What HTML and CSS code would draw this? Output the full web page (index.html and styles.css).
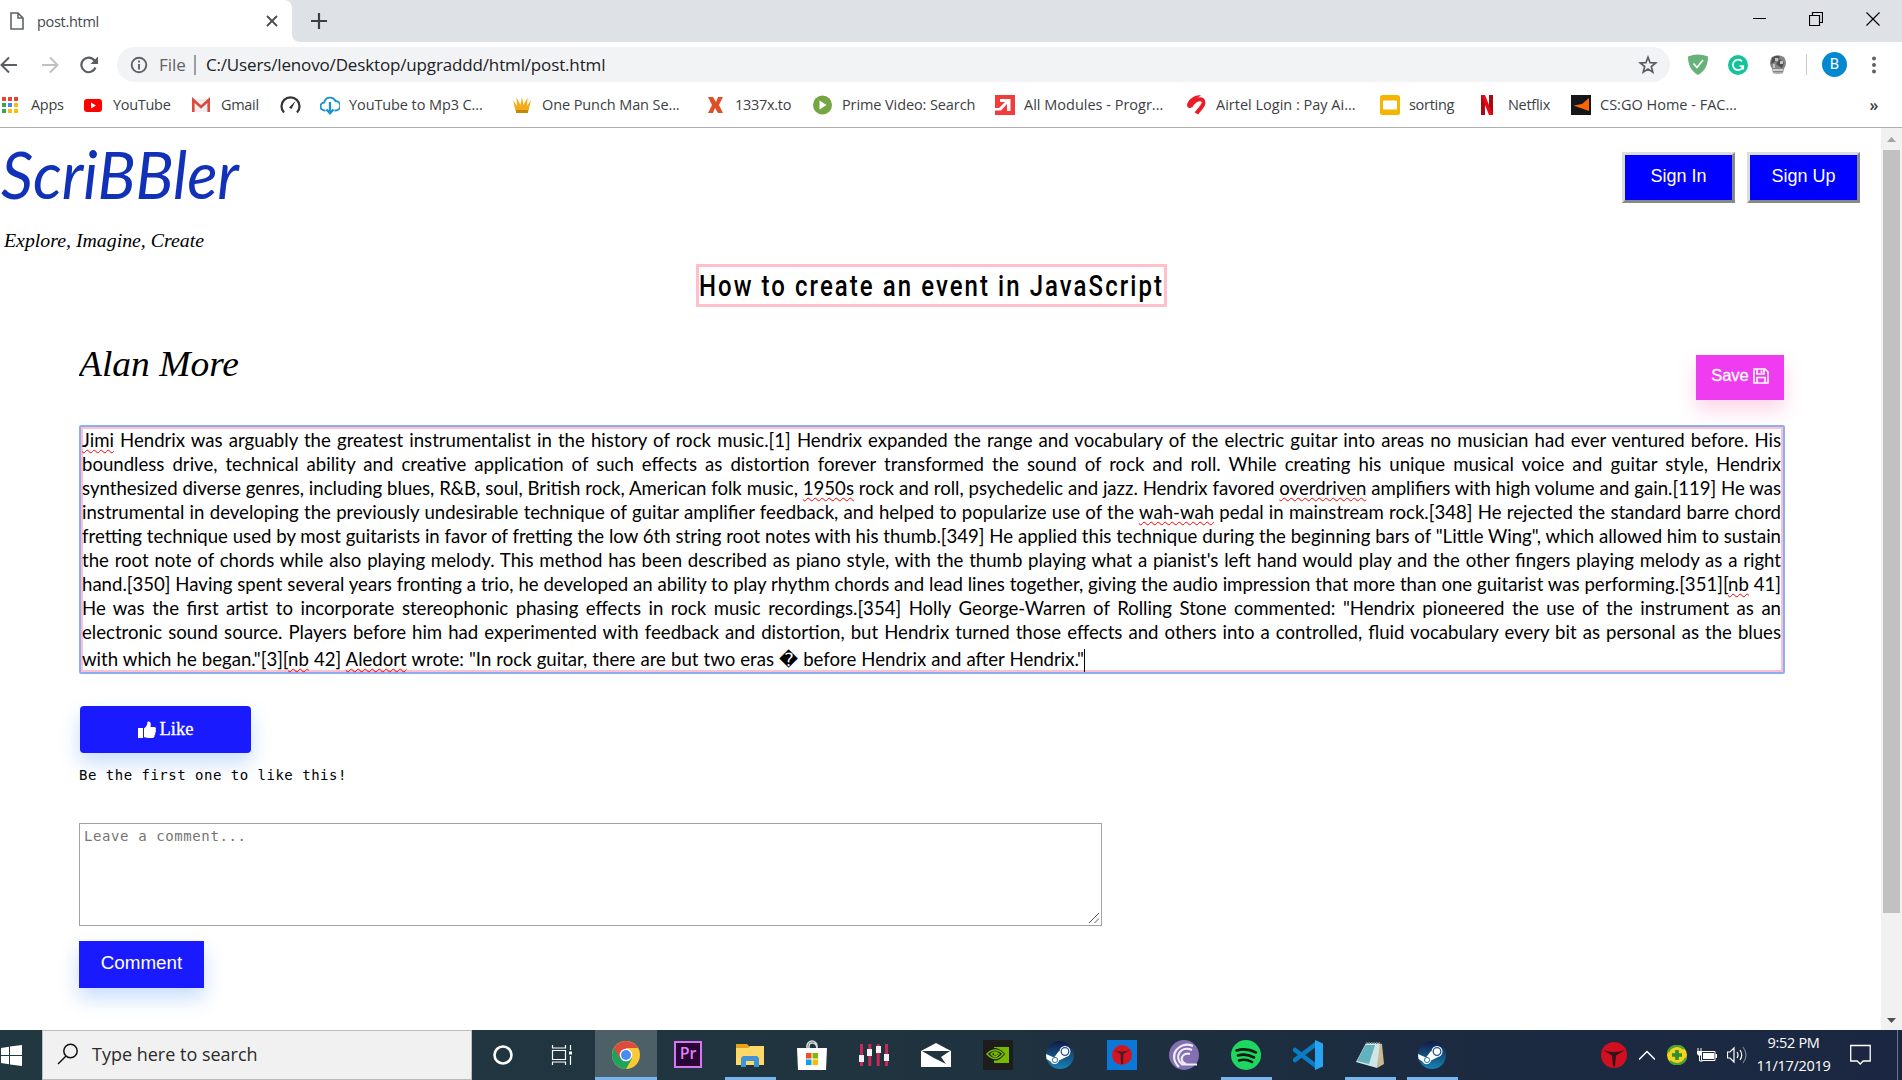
FILE: index.html
```html
<!DOCTYPE html>
<html lang="en">
<head>
<meta charset="utf-8">
<title>post.html</title>
<link rel="stylesheet" href="styles.css">
</head>
<body>
<div class="browser">
  <div class="tabstrip">
    <div class="tab">
      <svg width="16" height="20" viewBox="0 0 16 20"><path d="M2 2h7l5 5v11H2zM9 2v5h5" fill="none" stroke="#5f6368" stroke-width="1.6"/></svg>
      <span class="tab-title">post.html</span>
      <svg class="tab-close" width="12" height="12" viewBox="0 0 12 12"><path d="M1 1l10 10M11 1L1 11" stroke="#4a4d51" stroke-width="1.8"/></svg>
    </div>
    <svg class="tab-curve" width="9" height="42" viewBox="0 0 9 42"><path d="M0 0v42h9C3 42 0 39 0 33z" fill="#fff"/></svg>
    <svg class="new-tab" width="16" height="16" viewBox="0 0 16 16"><path d="M8 0v16M0 8h16" stroke="#3c4043" stroke-width="2.2"/></svg>
    <div class="window-buttons">
      <svg width="14" height="14" viewBox="0 0 14 14"><path d="M0 6.500h13" stroke="#000"/></svg>
      <svg width="14" height="14" viewBox="0 0 14 14"><path d="M.5 3.500h10v10H.5zM3.500 3V.5h10v10H11" fill="none" stroke="#000" stroke-width="1.200"/></svg>
      <svg width="14" height="14" viewBox="0 0 14 14"><path d="M.5.500l13 13M13.500.500l-13 13" stroke="#000" stroke-width="1.200"/></svg>
    </div>
  </div>

  <div class="toolbar">
    <svg class="nav" width="18" height="18" viewBox="0 0 18 18"><path d="M17 9H1.500M9 1.500L1.500 9 9 16.500" fill="none" stroke="#5a5e63" stroke-width="2"/></svg>
    <svg class="nav" width="18" height="18" viewBox="0 0 18 18"><path d="M1 9h15.500M9 1.500L16.500 9 9 16.500" fill="none" stroke="#bfc1c4" stroke-width="2"/></svg>
    <svg class="nav" width="18" height="18" viewBox="0 0 18 18"><path d="M15.500 11.500A7.300 7.300 0 1 1 14.500 4.500" fill="none" stroke="#5a5e63" stroke-width="2.200"/><path d="M18 .5V8h-7.500z" fill="#5a5e63"/></svg>
    <div class="omnibox">
      <svg width="18" height="18" viewBox="0 0 18 18"><circle cx="9" cy="9" r="7.300" fill="none" stroke="#5f6368" stroke-width="1.900"/><path d="M9 4.500v2M9 8v5.500" stroke="#5f6368" stroke-width="1.900"/></svg>
      <span class="scheme">File</span>
      <span class="url">C:/Users/lenovo/Desktop/upgraddd/html/post.html</span>
      <svg class="star" width="20" height="20" viewBox="0 0 20 20"><path d="M10 2.300l2.100 5.400 5.600.3-4.400 3.600 1.500 5.600L10 14.100l-4.800 3.100 1.500-5.600L2.300 8l5.600-.3z" fill="none" stroke="#5a5e63" stroke-width="1.700"/></svg>
    </div>
    <div class="extensions">
      <svg width="20" height="21" viewBox="0 0 20 21"><path d="M0 2.500Q10-1.500 20 2.500C20 11 17 17 10 21 3 17 0 11 0 2.500z" fill="#67b279"/><path d="M5.500 9.500l3.500 4 6-7.500" fill="none" stroke="#fff" stroke-width="1.700"/></svg>
      <svg width="20" height="20" viewBox="0 0 20 20"><circle cx="10" cy="10" r="10" fill="#15c39a"/><path d="M14 6.400A5.200 5.200 0 1 0 15.200 11H11.500M15.200 10.500v4" fill="none" stroke="#fff" stroke-width="1.700"/></svg>
      <svg width="20" height="20" viewBox="0 0 20 20"><path d="M4 2Q10-1.500 16 2 20 8 16 13.500L15 18Q10 20 5 18l-1-4.500Q0 8 4 2z" fill="#858585"/><path d="M4 3Q9-1 12 2L8 6 3 9zM8 9l4-5 4 4-2 5z" fill="#4f4f4f"/><path d="M7 3h3v3H7zM12 6h3v3h-3zM5 9h2v4H5z" fill="#c4c4c4"/><path d="M5 14h10v2H5zM5 17.500h10v1H5z" fill="#cfcfcf"/></svg>
    </div>
    <span class="avatar">B</span>
    <svg width="6" height="20" viewBox="0 0 6 20"><g fill="#5f6368"><circle cx="3" cy="3.500" r="2"/><circle cx="3" cy="10" r="2"/><circle cx="3" cy="16.500" r="2"/></g></svg>
  </div>

  <div class="bookmarks">
    <div class="bm"><svg width="20" height="20" viewBox="0 0 20 20"><path d="M0 2h4v4H0zM6 2h4v4H6zM12 2h4v4h-4z" fill="#ea4335"/><path d="M0 8h4v4H0zM0 14h4v4H0z" fill="#34a853"/><path d="M6 8h4v4H6z" fill="#4285f4"/><path d="M12 8h4v4h-4zM6 14h4v4H6zM12 14h4v4h-4z" fill="#fbbc05"/></svg><span>Apps</span></div>
    <div class="bm"><svg width="20" height="20" viewBox="0 0 20 20"><rect y="4" width="18" height="13" rx="3" fill="#f00"/><path d="M7 7.500v6l5-3z" fill="#fff"/></svg><span>YouTube</span></div>
    <div class="bm"><svg width="20" height="20" viewBox="0 0 20 20"><path d="M0 4h18v13H0z" fill="#eee"/><path d="M1.300 17V5L9 12l7.700-7v12" fill="none" stroke="#dd4b3e" stroke-width="2.600"/></svg><span>Gmail</span></div>
    <div class="bm"><svg width="22" height="20" viewBox="0 0 22 20"><path d="M4 17.500A9 9 0 1 1 17 17.500" fill="none" stroke="#333" stroke-width="2.200"/><path d="M9 12.500L15.500 6l-4 8z" fill="#333"/></svg></div>
    <div class="bm wide"><svg width="20" height="20" viewBox="0 0 20 20"><path d="M5.500 15.500H5a4 4 0 0 1-.8-8A6 6 0 0 1 15.500 6a4.500 4.500 0 0 1 0 9.500h-1" fill="none" stroke="#1c91d0" stroke-width="1.900"/><path d="M10 7v11M6.500 14.500L10 18.300l3.500-3.800" fill="none" stroke="#1c91d0" stroke-width="2.300"/></svg><span>YouTube to Mp3 C...</span></div>
    <div class="bm wide"><svg width="20" height="20" viewBox="0 0 20 20"><path d="M0 5l4 6-.5-8.500L7.500 10 9 2l1.500 8 4-7.500L14 11l4-6-2.500 11h-13z" fill="#f5ab18"/><path d="M3 15h12v3H3z" fill="#c4860b"/></svg><span>One Punch Man Se...</span></div>
    <div class="bm tight"><svg width="20" height="20" viewBox="0 0 20 20"><path d="M0 2h5l3 5 2-5h5l-4 8 4 8h-5l-3-5-2 5H0l4-8z" fill="#df5027"/></svg><span>1337x.to</span></div>
    <div class="bm wide"><svg width="20" height="20" viewBox="0 0 20 20"><circle cx="9.500" cy="10" r="9.500" fill="#76a544"/><path d="M6.500 5.500v9l7-4.500z" fill="#fff"/></svg><span>Prime Video: Search</span></div>
    <div class="bm wider"><svg width="20" height="20" viewBox="0 0 20 20"><path d="M0 0h20v20H0z" fill="#f23c3c"/><path d="M5 4h10.500v12H12V9L6 15.500H0v-2.500h4L10 7H5z" fill="#fff"/></svg><span>All Modules - Progr...</span></div>
    <div class="bm wider"><svg width="20" height="20" viewBox="0 0 20 20"><path d="M3.500 11.500C8 3 17 2 16.500 8c-.5 4-5 7-7 10.500" fill="none" stroke="#ed1c24" stroke-width="4"/><path d="M0 10C1 4 9-1 14 .5c-4 2-7 6-9 11C4 14 0 13.500 0 10z" fill="#ed1c24"/></svg><span>Airtel Login : Pay Ai...</span></div>
    <div class="bm"><svg width="20" height="20" viewBox="0 0 20 20"><rect width="20" height="20" rx="2.500" fill="#f5b400"/><path d="M3 5.500h14v9H3z" fill="#fff"/></svg><span>sorting</span></div>
    <div class="bm"><svg width="18" height="20" viewBox="0 0 18 20"><path d="M0 0h4v20H0zM8 0h4v20H8z" fill="#a90a12"/><path d="M0 0h4l8 20H8z" fill="#e50914"/></svg><span>Netflix</span></div>
    <div class="bm wider"><svg width="20" height="20" viewBox="0 0 20 20"><path d="M0 0h20v20H0z" fill="#14171a"/><path d="M18 3v13L2.500 10.500 11 9z" fill="#f60"/></svg><span>CS:GO Home - FAC...</span></div>
    <span class="more">»</span>
  </div>
</div>

<div class="viewport">
  <main class="page">
    <header>
      <div class="brand">
        <svg class="logo" width="242" height="68" viewBox="0 0 242 68"><text x="1" y="51" textLength="238" lengthAdjust="spacingAndGlyphs">ScriBBler</text></svg>
        <svg class="tagline" width="210" height="26" viewBox="0 0 210 26"><text x="4" y="16" textLength="200" lengthAdjust="spacingAndGlyphs">Explore, Imagine, Create</text></svg>
      </div>
      <div class="auth">
        <button class="auth-btn">Sign In</button>
        <button class="auth-btn">Sign Up</button>
      </div>
    </header>

    <h1 class="title"><svg width="465" height="37" viewBox="0 0 465 37"><text x="0" y="29" textLength="465" lengthAdjust="spacingAndGlyphs">How to create an event in JavaScript</text></svg></h1>

    <div class="byline">
      <svg class="author" width="170" height="45" viewBox="0 0 170 45"><text x="0" y="31" textLength="160" lengthAdjust="spacingAndGlyphs">Alan More</text></svg>
      <button class="save">Save <svg width="16" height="16" viewBox="0 0 16 16"><path d="M1 1h11l3 3v11H1zM4 1v5h7V1M4 15V9.500h8V15M8.500 2.500v2.500" fill="none" stroke="#fff" stroke-width="1.600"/></svg></button>
    </div>

    <article class="post">
      <p><u>Jimi</u> Hendrix was arguably the greatest instrumentalist in the history of rock music.[1] Hendrix expanded the range and vocabulary of the electric guitar into areas no musician had ever ventured before. His</p>
      <p>boundless drive, technical ability and creative application of such effects as distortion forever transformed the sound of rock and roll. While creating his unique musical voice and guitar style, Hendrix</p>
      <p>synthesized diverse genres, including blues, R&amp;B, soul, British rock, American folk music, <u>1950s</u> rock and roll, psychedelic and jazz. Hendrix favored <u>overdriven</u> amplifiers with high volume and gain.[119] He was</p>
      <p>instrumental in developing the previously undesirable technique of guitar amplifier feedback, and helped to popularize use of the <u>wah-wah</u> pedal in mainstream rock.[348] He rejected the standard barre chord</p>
      <p>fretting technique used by most guitarists in favor of fretting the low 6th string root notes with his thumb.[349] He applied this technique during the beginning bars of "Little Wing", which allowed him to sustain</p>
      <p>the root note of chords while also playing melody. This method has been described as piano style, with the thumb playing what a pianist's left hand would play and the other fingers playing melody as a right</p>
      <p>hand.[350] Having spent several years fronting a trio, he developed an ability to play rhythm chords and lead lines together, giving the audio impression that more than one guitarist was performing.[351][<u>nb</u> 41]</p>
      <p>He was the first artist to incorporate stereophonic phasing effects in rock music recordings.[354] Holly George-Warren of Rolling Stone commented: "Hendrix pioneered the use of the instrument as an</p>
      <p>electronic sound source. Players before him had experimented with feedback and distortion, but Hendrix turned those effects and others into a controlled, fluid vocabulary every bit as personal as the blues</p>
      <p class="last">with which he began."[3][<u>nb</u> 42] <u>Aledort</u> wrote: "In rock guitar, there are but two eras &#xFFFD; before Hendrix and after Hendrix."<i class="caret"></i></p>
    </article>

    <button class="like"><svg width="18" height="18" viewBox="0 0 18 18"><path d="M0 7h5v10H0zM6 7.500C8 6 9.500 4 9.500 1c2-1.500 4 .5 3 5h4c2 .5 2 2 1 3 .8 1 .5 2-.3 2.700.5 1 0 2-.7 2.500.3 1.500-.5 2.800-2 2.800-3 .2-6 0-8.500-1z" fill="#fff"/></svg> Like</button>
    <p class="likes-note">Be the first one to like this!</p>
    <div class="comment-box">Leave a comment...
      <svg width="10" height="10" viewBox="0 0 10 10"><path d="M0 10L10 0M5.500 10L10 5.500" stroke="#555" stroke-width="1"/></svg>
    </div>
    <button class="comment-btn">Comment</button>
  </main>

  <div class="scrollbar">
    <svg width="21" height="21" viewBox="0 0 21 21"><path d="M6 14h9l-4.500-5z" fill="#a3a3a3"/></svg>
    <div class="thumb"></div>
    <svg class="down" width="21" height="21" viewBox="0 0 21 21"><path d="M6 9h9l-4.500 5z" fill="#505050"/></svg>
  </div>
</div>

<div class="taskbar">
  <div class="start"><svg width="21" height="21" viewBox="0 0 21 21"><path d="M0 3l8-1.200v8.200H0zM9 1.600L21 0v10H9zM0 11h8v8.200L0 18zM9 11h12v10L9 19.400z" fill="#fff"/></svg></div>
  <div class="search"><svg width="22" height="22" viewBox="0 0 22 22"><circle cx="13.500" cy="8" r="6.700" fill="none" stroke="#111" stroke-width="1.500"/><path d="M9 13L1 21" stroke="#111" stroke-width="1.500"/></svg><span>Type here to search</span></div>
  <div class="apps">
    <div class="app"><svg width="22" height="22" viewBox="0 0 22 22"><circle cx="11" cy="11" r="8.500" fill="none" stroke="#fff" stroke-width="2.600"/></svg></div>
    <div class="app view"><svg width="22" height="22" viewBox="0 0 22 22"><path d="M1.500 1v3h13V1M1.500 6.500h13v9h-13zM1.500 21v-3h13v3M19.500 1v5M19.500 12v9" fill="none" stroke="#fff" stroke-width="1.200"/><path d="M18 7.500h3v3h-3z" fill="#fff"/></svg></div>
    <div class="app active"><svg width="28" height="28" viewBox="0 0 28 28"><circle cx="14" cy="14" r="14" fill="#fbc934"/><path d="M14 14L1.900 7A14 14 0 0 1 26.100 7H14z" fill="#dd4b3e"/><path d="M14 14L1.900 7A14 14 0 0 0 14 28l6-10.500z" fill="#1da35b"/><path d="M1.900 7L8 17.500 14 7z" fill="#dd4b3e"/><circle cx="14" cy="14" r="6.300" fill="#fff"/><circle cx="14" cy="14" r="5" fill="#4a8af4"/></svg></div>
    <div class="app"><span class="premiere">Pr</span></div>
    <div class="app open"><svg width="28" height="24" viewBox="0 0 28 24"><path d="M0 1h11l2 2v4H0z" fill="#e3a21a"/><path d="M0 5h12l2-2h14v19H0z" fill="#ffd868"/><path d="M5 24V15l2-2h14l2 2v9h-5v-6H10v6z" fill="#3f94d8"/></svg></div>
    <div class="app"><svg width="30" height="30" viewBox="0 0 30 30"><path d="M10 9V6a5 5 0 0 1 10 0v3M12 9V6q0-3 3-3 5 0 5 6" fill="none" stroke="#d5d9dc" stroke-width="1.600"/><path d="M0 8h30L29 30H1z" fill="#fff"/><path d="M9 13h5.500v5.500H9z" fill="#f25022"/><path d="M15.500 13H21v5.500h-5.500z" fill="#7fba00"/><path d="M9 19.500h5.500V25H9z" fill="#00a4ef"/><path d="M15.500 19.500H21V25h-5.500z" fill="#ffb900"/></svg></div>
    <div class="app"><svg width="30" height="24" viewBox="0 0 30 24"><path d="M2.500 1v22M10.800 1v22M19.200 1v22M27.500 1v22" stroke="#c9285a" stroke-width="3"/><path d="M0 12h5v7H0zM8 6h5v7H8zM17 3h5v7h-5zM25 11h5v7h-5z" fill="#f2f2f2"/></svg></div>
    <div class="app"><svg width="30" height="24" viewBox="0 0 30 24"><path d="M0 8L15 0l15 8v16H0z" fill="#fff"/><path d="M1 8h28l-9 6 5 7-12-6z" fill="#20343f"/></svg></div>
    <div class="app"><svg width="30" height="30" viewBox="0 0 30 30"><path d="M0 0h30v30H0z" fill="#1d1d1b"/><path d="M11 7h15v16H11z" fill="#76b900"/><path d="M3 14q8-9 17 0-8 10-17 0zM7 14q5-6 10 0-5 6-10 0z" fill="none" stroke="#1d1d1b" stroke-width="3"/><path d="M4 14q8-8 16 0-8 9-16 0zM8 14q4-4 8 0-4 5-8 0z" fill="none" stroke="#76b900" stroke-width="1.500"/></svg></div>
    <div class="app"><svg width="28" height="28" viewBox="0 0 28 28"><use href="#steam"/></svg></div>
    <div class="app"><svg width="30" height="30" viewBox="0 0 30 30"><path d="M0 0h30v30H0z" fill="#0b78d8"/><circle cx="15" cy="15" r="10" fill="#d31423"/><path d="M7 10q8 3 16 0l-6.500 4-.5 10h-2l-.500-10z" fill="#4a1c20"/></svg></div>
    <div class="app"><svg width="30" height="30" viewBox="0 0 30 30"><circle cx="15" cy="15" r="15" fill="#8370b3"/><path d="M24 6C10 0-2 16 10 27M23 10C12 5 4 17 13 24.500h15M21 14c-8-2-12 7-4 10" fill="none" stroke="#f0edf6" stroke-width="2.200"/></svg></div>
    <div class="app open"><svg width="30" height="30" viewBox="0 0 30 30"><circle cx="15" cy="15" r="15" fill="#1ed760"/><path d="M5.500 10.500q10-3 19.500 2M7 15.500q8-2.500 16 2M8 20.500q7-2 13 1.500" fill="none" stroke="#0c1a10" stroke-width="2.600" stroke-linecap="round"/></svg></div>
    <div class="app"><svg width="30" height="30" viewBox="0 0 30 30"><path d="M2 10L23 26M2 20L23 4" stroke="#0a7cc4" stroke-width="4.500" stroke-linecap="round"/><path d="M22 0l8 3.500v23L22 30z" fill="#27a5f2"/></svg></div>
    <div class="app open"><svg width="28" height="28" viewBox="0 0 28 28"><path d="M22 2l4 1 2 20-7 4z" fill="#c9b78d"/><path d="M10 2h14l-3 25L0 21z" fill="#cfe6e8"/><path d="M9.500 4H19l-6 19-12-3z" fill="#62b2bd"/><path d="M10 2h14" stroke="#777" stroke-width="2" stroke-dasharray="1.500 1"/></svg></div>
    <div class="app open"><svg width="28" height="28" viewBox="0 0 28 28"><defs><linearGradient id="sg" x2="0" y2="1"><stop offset="0" stop-color="#131a45"/><stop offset="1" stop-color="#1583b5"/></linearGradient></defs><g id="steam"><circle cx="14" cy="14" r="14" fill="url(#sg)"/><path d="M0 13l8 3.500 5-6.500 7 6-7 3.500a4.500 4.500 0 0 1-8.500 1L.5 18z" fill="#fff"/><circle cx="19" cy="10.500" r="5.500" fill="#fff"/><circle cx="19" cy="10.500" r="3.800" fill="#fff" stroke="#26578a" stroke-width="1.300"/><circle cx="9" cy="19" r="2.600" fill="#fff" stroke="#3a78a5"/></g></svg></div>
  </div>
  <div class="tray">
    <svg width="26" height="26" viewBox="0 0 26 26"><circle cx="13" cy="13" r="13" fill="#d01020"/><path d="M2 8q11 4 22 0l-9 5.500-1 11h-2l-1-11z" fill="#331419"/></svg>
    <svg width="16" height="10" viewBox="0 0 16 10"><path d="M0 9.500L8 1.500l8 8" fill="none" stroke="#fff" stroke-width="1.500"/></svg>
    <svg width="20" height="20" viewBox="0 0 20 20"><circle cx="10" cy="10" r="10" fill="#f5d31c"/><path d="M1 7A9.500 9.500 0 0 1 17 4M19 13A9.500 9.500 0 0 1 3 16" fill="none" stroke="#4ba335" stroke-width="2.500"/><path d="M10 5v10M5 10h10" stroke="#2c9030" stroke-width="3.600"/></svg>
    <svg width="20" height="14" viewBox="0 0 20 14"><path d="M4.500 3.500H18v9H4.500z" fill="none" stroke="#fff"/><path d="M6 5h11v6H6zM18.500 6h1.500v4h-1.500zM0 3h5v3L3 8H2L0 6z" fill="#fff"/><path d="M1 0v3M4 0v3M2.500 7v6h3" fill="none" stroke="#fff"/></svg>
    <svg width="21" height="18" viewBox="0 0 21 18"><path d="M.5 6H3l4-4v14l-4-4H.5zM10 6q2 3 0 6M13 4q3.500 5 0 10" fill="none" stroke="#fff" stroke-width="1.200"/><path d="M16 1q6 8 0 16" fill="none" stroke="#7b8798" stroke-width="1.200"/></svg>
    <div class="clock"><span class="time">9:52 PM</span><span>11/17/2019</span></div>
    <svg class="note" width="21" height="21" viewBox="0 0 21 21"><path d="M.7 1.500h19.500v15.500h-7l-3 3-3-3H.7z" fill="none" stroke="#fff" stroke-width="1.300"/></svg>
  </div>
</div>
</body>
</html>
```
FILE: styles.css
```css
* { box-sizing: border-box; }
html, body { margin: 0; height: 1080px; overflow: hidden; }
body { display: flex; flex-direction: column; background: #fff; font-family: "Open Sans", "Noto Sans", sans-serif; }
svg { display: block; flex: none; }
button { display: flex; align-items: center; justify-content: center; padding: 0; border: 0; color: #fff; font-family: "Liberation Sans", Arial, sans-serif; }

/* Browser window */
.browser { height: 128px; border-bottom: 1px solid #aeaeae; display: flex; flex-direction: column; }
.tabstrip { height: 42px; background: #dee1e6; display: flex; align-items: center; }
.tab { width: 292px; height: 42px; background: #fff; border-top-right-radius: 8px; display: flex; align-items: center; padding: 0 14px 0 9px; }
.tab-title { flex: 1; margin-left: 12px; font-size: 14.5px; letter-spacing: -.3px; color: #45484c; }
.new-tab { margin-left: 10px; }
.tab-close { margin-top: -1px; }
.window-buttons { margin: -5px 22px 0 auto; display: flex; gap: 42px; }
.window-buttons svg:nth-child(2) { margin-right: 1px; }

.toolbar { height: 45px; display: flex; align-items: center; padding-right: 25px; }
.nav { margin-right: 23px; }
.nav + .nav { margin-right: 21px; }
.nav + .nav + .nav { margin-right: 19px; }
.omnibox { width: 1553px; height: 35px; border-radius: 18px; background: #f1f3f4; display: flex; align-items: center; padding: 0 12px 0 13px; font-size: 17px; }
.scheme { margin-left: 11px; padding-right: 8px; border-right: 2px solid #9a9da1; line-height: 20px; color: #5f6368; }
.url { margin-left: 10px; letter-spacing: -.15px; color: #202124; }
.star { margin-left: auto; }
.extensions { display: flex; align-items: center; gap: 20px; margin-left: 18px; padding-right: 18px; border-right: 1px solid #ccc; }
.avatar { width: 25px; height: 25px; margin: 0 24px 0 15px; border-radius: 50%; background: #0288d1; color: #fff; font: 15px/25px Roboto, sans-serif; text-align: center; }

.bookmarks { height: 37px; padding: 0 24px 2px 2px; display: grid; grid-template-columns: 82px 108px 88px 40px 193px 195px 105px 182px 192px 193px 101px 90px 1fr auto; align-items: center; font-size: 14.5px; letter-spacing: -.3px; color: #3c4043; white-space: nowrap; }
.bm { display: flex; align-items: center; gap: 9px; }
.wide { letter-spacing: -.1px; }
.wider { letter-spacing: 0; }
.tight { gap: 7px; }
.more { font-weight: 600; font-size: 16px; }

/* Page */
.viewport { height: 902px; display: flex; }
.page { flex: 1; display: flex; flex-direction: column; align-items: flex-start; padding-left: 79px; }
header { width: 1860px; margin-left: -79px; display: flex; justify-content: space-between; }
.logo { margin-top: 20px; font: italic 66px "Lato", sans-serif; fill: #1132b8; overflow: visible; }
.tagline { margin-top: 15px; font: italic 19px "Liberation Serif", serif; overflow: visible; }
.auth { display: flex; gap: 12px; margin-top: 24px; }
.auth-btn { width: 113px; height: 51px; padding-bottom: 2px; background: #00f; border: 3px solid; border-color: #ddd #888 #888 #ddd; font-size: 18px; }
.title { margin: 7px 0 0 617px; width: 471px; height: 43px; border: 3px solid #ffc0cb; font: 500 29px Roboto, sans-serif; letter-spacing: 2.5px; }
.title svg { overflow: visible; }
.byline { width: 1705px; height: 93px; margin-top: 38px; display: flex; justify-content: space-between; }
.author { font: italic 35px "Liberation Serif", serif; }
.save { width: 88px; height: 45px; margin-top: 10px; padding-bottom: 4px; gap: 4px; background: #f03cf0; box-shadow: 0 10px 20px rgba(240, 60, 150, .22); font-size: 16.500px; -webkit-text-stroke: .3px #fff; }
.post { width: 1706px; height: 249px; margin-top: -13px; border: 2px solid #8baef2; box-shadow: inset 0 0 0 2px #ffc0cb; border-radius: 2px; padding: 1px 2px 0 1px; font: 18.6px/24px "Lato", "DejaVu Sans", sans-serif; color: #000; }
.post p { margin: 0; height: 24px; white-space: nowrap; text-align: justify; text-align-last: justify; }
.post .last { height: 30px; line-height: 30px; text-align-last: left; word-spacing: .3px; }
.post u { text-decoration: underline wavy #f00 1px; text-underline-offset: 2px; }
.caret { display: inline-block; width: 1px; height: 23px; background: #000; vertical-align: -6px; }
.like { width: 171px; height: 47px; margin: 32px 0 0 1px; gap: 4px; border-radius: 4px; background: #1a1aff; box-shadow: 0 10px 20px rgba(30, 120, 240, .25); font: 18.5px "Liberation Serif", serif; -webkit-text-stroke: .3px #fff; }
.likes-note { margin: 11px 0 0; font: 14px/22px "DejaVu Sans Mono", monospace; letter-spacing: .5px; }
.comment-box { position: relative; width: 1023px; height: 103px; margin-top: 37px; padding: 1px 4px; border: 1px solid #a3a3a3; color: #757575; font: 14px/22px "DejaVu Sans Mono", monospace; letter-spacing: .6px; }
.comment-box svg { position: absolute; right: 2px; bottom: 2px; }
.comment-btn { width: 125px; height: 47px; margin-top: 15px; padding-bottom: 3px; background: #1a1aff; box-shadow: 0 10px 20px rgba(30, 120, 240, .25); font-size: 18.800px; }

.scrollbar { width: 21px; background: #f1f1f1; display: flex; flex-direction: column; }
.thumb { width: 17px; height: 763px; margin: 1px 2px; background: #c1c1c1; }
.down { margin-top: auto; }

/* Taskbar */
.taskbar { height: 50px; display: flex; background: linear-gradient(90deg, #213840, #20343f 45%, #1c2b40 75%, #1b2742); }
.start { width: 42px; display: flex; align-items: center; padding-left: 1px; }
.search { width: 430px; background: #f1f1f1; border: 1px solid #bcbcbc; display: flex; align-items: center; gap: 13px; padding: 0 0 2px 14px; font-size: 18px; color: #2b2b2b; }
.apps { display: flex; }
.app { width: 62px; height: 50px; display: flex; align-items: center; justify-content: center; }
.app:first-child { width: 61px; }
.view { padding-right: 5px; }
.active { background: #4d6068; border-bottom: 3px solid #76b5f0; padding-top: 3px; }
.open { background: linear-gradient(#76b5f0, #76b5f0) center bottom / 51px 3px no-repeat; }
.premiere { width: 28px; height: 27px; margin-top: -2px; border: 2px solid #d676f5; background: #2a0634; color: #dc80fa; font: 600 16px/21px "Open Sans", sans-serif; text-align: center; }
.tray { margin-left: auto; width: 301px; display: flex; align-items: center; }
.tray svg:nth-child(2) { margin: 0 12px; }
.tray svg:nth-child(4) { margin: 0 10px; }
.clock { width: 77px; margin-left: 7px; padding-bottom: 2px; display: flex; flex-direction: column; align-items: center; color: #fff; font-size: 14.500px; line-height: 23px; letter-spacing: -.3px; }
.note { margin: -2px 0 0 18px; }
.tray::after { content: ""; width: 1px; height: 50px; margin-left: 26px; background: #6d7688; }
```
